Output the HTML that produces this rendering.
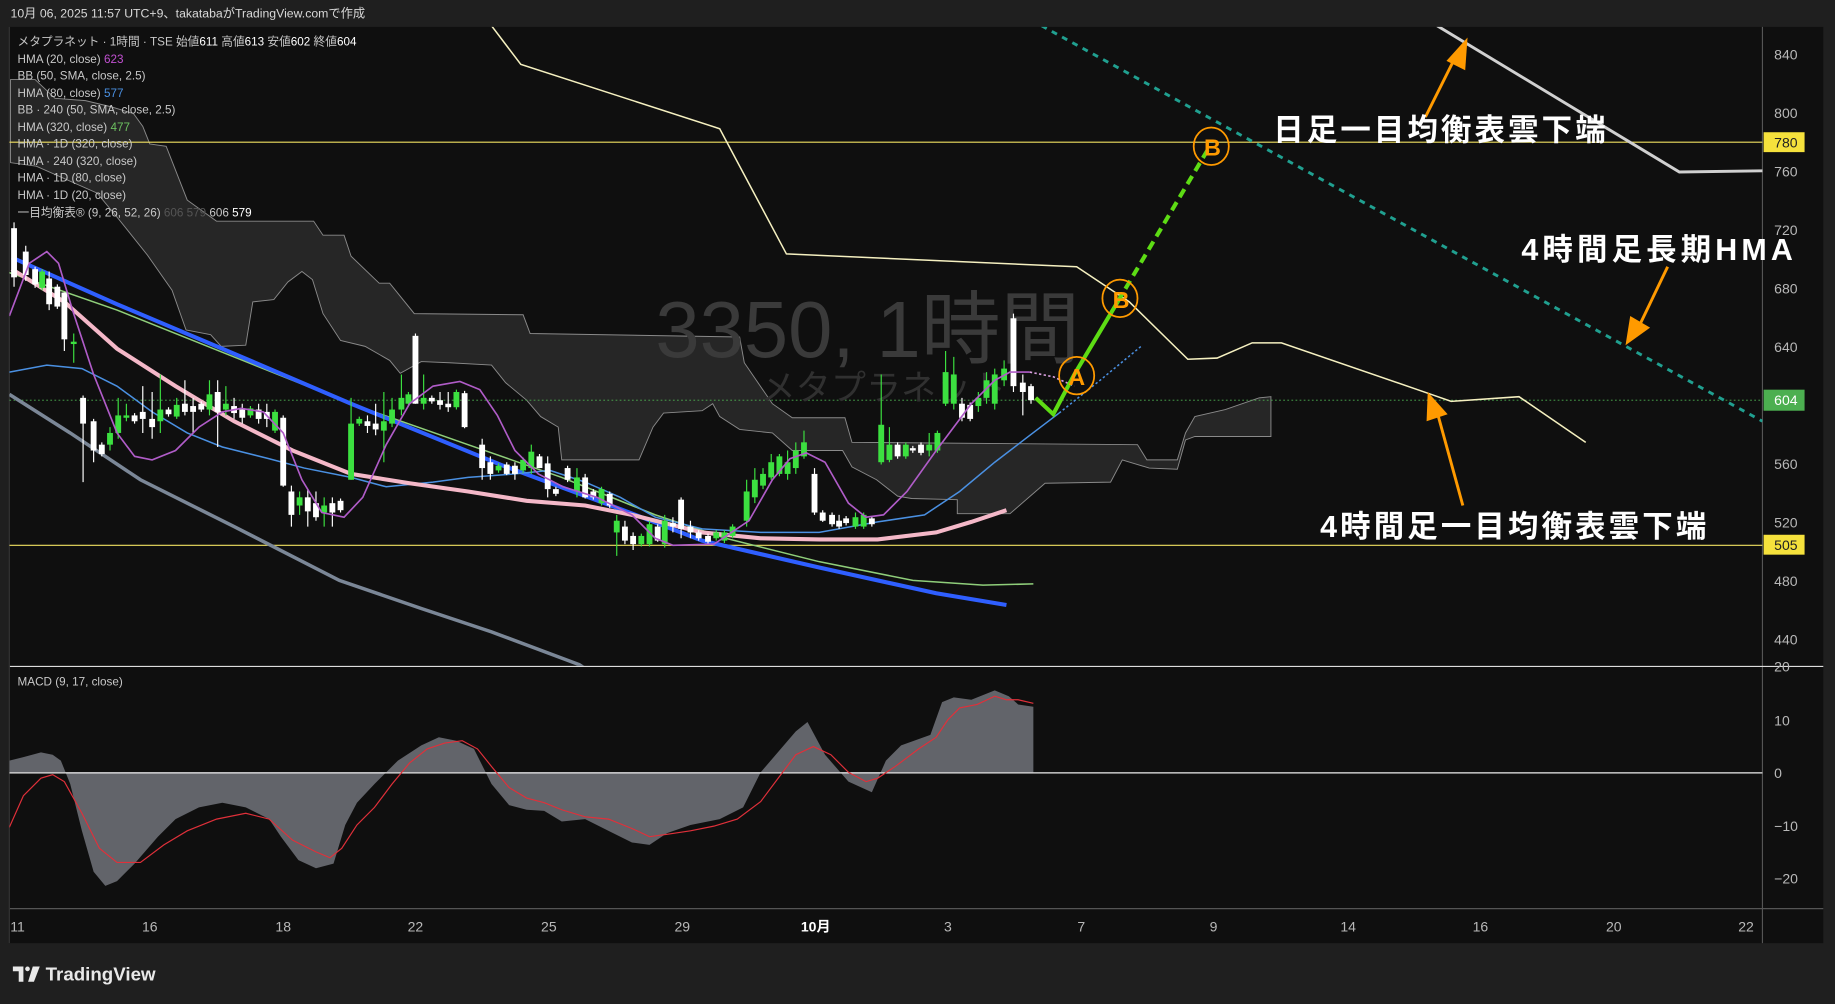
<!DOCTYPE html>
<html><head><meta charset="utf-8"><style>
html,body{margin:0;padding:0;background:#1f1f1f;width:1835px;height:1004px;overflow:hidden}
svg{display:block}
text{font-family:"Liberation Sans","Noto Sans CJK JP",sans-serif}
</style></head><body>
<svg width="1835" height="1004" viewBox="0 0 1568 858" preserveAspectRatio="none" xmlns="http://www.w3.org/2000/svg">
<rect x="0" y="0" width="1568" height="858" fill="#1f1f1f"/>
<text x="9" y="15" font-size="10.5" fill="#d8d8d8">10月 06, 2025 11:57 UTC+9、takatabaがTradingView.comで作成</text>
<rect x="8" y="23" width="1550" height="783" fill="#0f0f0f"/>
<line x1="1506" y1="23" x2="1506" y2="806" stroke="#555" stroke-width="1"/>
<line x1="8" y1="569.5" x2="1558" y2="569.5" stroke="#ddd" stroke-width="1"/>
<line x1="8" y1="776.5" x2="1558" y2="776.5" stroke="#555" stroke-width="1"/>
<line x1="8" y1="23" x2="8" y2="806" stroke="#333"/>

<clipPath id="main"><rect x="8" y="23" width="1498" height="546"/></clipPath>
<clipPath id="mac"><rect x="8" y="570" width="1498" height="206"/></clipPath>
<g clip-path="url(#main)">
<polygon fill="#262626" stroke="#8a8a8a" stroke-width="0.8" points="9,68 30,68 47,84 73,86 94,91 114,97 122,108 128,123 142,125 160,171 185,189 268,189 276,201 294,201 300,219 324,242 333,242 354,268 447,269 453,285 632,288 636,310 660,345 677,357 722,357 728,378 972,380 980,393 1006,393 1013,370 1021,356 1047,350 1076,340 1086,339 1086,373 1068,373 1021,373 1013,376 1006,401 982,400 959,393 949,412 893,413 863,439 818,439 818,427 779,426 767,424 749,410 728,399 720,385 677,385 660,370 632,367 615,356 609,345 600,351 567,353 558,365 546,393 480,393 477,365 462,356 450,342 432,327 420,312 384,310 360,309 342,319 333,308 312,296 291,291 276,268 267,239 258,232 246,241 234,256 216,258 210,295 189,296 180,286 159,282 147,248 126,218 102,188 83,165 31,142 9,139"/>
<line x1="8" y1="121.5" x2="1506" y2="121.5" stroke="#f0e060" stroke-width="1"/>
<line x1="8" y1="466" x2="1506" y2="466" stroke="#f0e060" stroke-width="1"/>
<line x1="8" y1="342" x2="1506" y2="342" stroke="#4caf50" stroke-width="0.8" stroke-dasharray="1.5,2"/>
<text x="560" y="305" font-size="68" fill="#3a3a3a">3350, 1時間</text>
<text x="650" y="342" font-size="30" fill="#303030">メタプラネット</text>
<polyline fill="none" stroke="#7b8797" stroke-width="3" points="8,337 60,370 120,410 200,450 290,496 360,520 420,540 495,568 510,578"/>
<polyline fill="none" stroke="#f5f0c0" stroke-width="1.3" points="420,22 445,55 615,110 672,217 920,228 965,258 1015,307 1040,306 1070,293 1095,293 1220,336 1240,343 1298,339 1355,378"/>
<polyline fill="none" stroke="#d0d0d0" stroke-width="2.5" points="1228,22 1435,147 1506,146"/>
<line x1="890" y1="22" x2="1506" y2="360" stroke="#20a090" stroke-width="2.5" stroke-dasharray="5,5"/>
<polyline fill="none" stroke="#8fce7a" stroke-width="1.3" points="8,233 100,265 200,305 300,345 400,380 480,408 560,440 620,460 700,480 780,496 840,500 883,499"/>
<polyline fill="none" stroke="#2f5fff" stroke-width="3.5" points="10,220 100,260 190,298 300,345 430,398 530,435 600,462 700,485 800,507 860,517"/>
<polyline fill="none" stroke="#4a90e2" stroke-width="1.3" points="8,318 40,312 70,315 100,330 130,352 160,370 190,382 230,392 260,400 300,408 330,416 370,412 400,408 440,405 470,402 500,412 530,425 560,442 600,452 650,455 700,455 750,446 790,440 820,420 850,395 880,372 905,353"/>
<polyline fill="none" stroke="#4a90e2" stroke-width="1.3" stroke-dasharray="2,2" points="905,353 940,325 975,296"/>
<polyline fill="none" stroke="#f4b8c8" stroke-width="3.5" points="10,230 55,258 100,298 150,330 200,360 250,385 300,405 350,413 400,420 450,428 500,432 540,440 600,455 650,460 700,461 750,461 800,455 830,446 860,436"/>
<g>
<g stroke-width="1">
<path stroke="#fff" d="M12,190V245M22,210V240M30,228V246M42,232V265M49,243V264M55,250V300M71,338V412M80,358V395M87,378V390M115,353V362M122,330V370M130,335V375M144,348V356M158,325V355M165,340V370M172,343V352M186,325V382M200,340V358M207,345V362M221,345V362M228,345V365M242,355V416M249,415V450M263,418V450M270,420V445M284,425V450M291,426V438M314,355V370M321,345V372M355,285V345M369,338V345M376,335V350M383,335V352M397,334V366M412,375V410M419,390V410M433,395V406M440,395V410M461,388V400M468,390V425M475,416V424M485,398V412M500,405V426M507,418V427M521,420V434M534,445V465M541,455V470M562,448V463M575,442V455M582,425V460M590,445V460M597,453V462M605,456V465M696,400V440M703,436V446M711,438V450M717,440V452M723,441V449M745,441V450M767,378V392M780,381V387M787,378V389M822,340V360M829,344V360M866,268V335M874,320V355M881,328V345"/>
<path stroke="#3ce040" d="M36,230V248M63,285V310M94,365V385M101,340V375M108,345V360M137,320V370M151,340V358M179,325V355M193,330V355M214,347V357M235,350V370M256,420V440M277,425V450M300,340V410M307,356V364M328,335V395M335,340V365M343,320V355M349,335V347M362,320V350M390,333V350M426,396V404M447,391V404M454,380V405M493,400V425M514,416V432M527,440V475M548,456V467M555,445V467M568,440V468M612,453V462M619,453V464M626,448V460M638,410V450M645,400V430M652,400V418M659,388V410M666,388V407M673,385V410M680,378V405M687,368V392M731,438V452M738,438V452M753,320V397M760,365V395M774,378V392M794,370V390M801,368V387M808,300V347M815,305V350M836,335V352M843,318V345M850,315V350M858,308V330"/>
</g>
<g fill="#fff">
<rect x="9.5" y="195" width="5" height="42"/><rect x="19.5" y="215" width="5" height="20"/><rect x="27.5" y="230" width="5" height="13"/><rect x="39.5" y="238" width="5" height="22"/><rect x="46.5" y="245" width="5" height="17"/><rect x="52.5" y="250" width="5" height="40"/><rect x="68.5" y="340" width="5" height="22"/><rect x="77.5" y="360" width="5" height="25"/><rect x="84.5" y="380" width="5" height="8"/><rect x="112.5" y="355" width="5" height="5"/><rect x="119.5" y="352" width="5" height="6"/><rect x="127.5" y="358" width="5" height="7"/><rect x="141.5" y="350" width="5" height="4"/><rect x="155.5" y="345" width="5" height="7"/><rect x="162.5" y="347" width="5" height="5"/><rect x="169.5" y="345" width="5" height="5"/><rect x="183.5" y="335" width="5" height="17"/><rect x="197.5" y="347" width="5" height="6"/><rect x="204.5" y="350" width="5" height="7"/><rect x="218.5" y="350" width="5" height="8"/><rect x="225.5" y="352" width="5" height="6"/><rect x="239.5" y="357" width="5" height="58"/><rect x="246.5" y="420" width="5" height="20"/><rect x="260.5" y="425" width="5" height="12"/><rect x="267.5" y="430" width="5" height="12"/><rect x="281.5" y="430" width="5" height="8"/><rect x="288.5" y="428" width="5" height="8"/><rect x="311.5" y="360" width="5" height="4"/><rect x="318.5" y="362" width="5" height="5"/><rect x="352.5" y="287" width="5" height="58"/><rect x="366.5" y="340" width="5" height="3"/><rect x="373.5" y="342" width="5" height="4"/><rect x="380.5" y="345" width="5" height="3"/><rect x="394.5" y="336" width="5" height="29"/><rect x="409.5" y="380" width="5" height="20"/><rect x="416.5" y="395" width="5" height="10"/><rect x="430.5" y="397" width="5" height="8"/><rect x="437.5" y="398" width="5" height="7"/><rect x="458.5" y="390" width="5" height="10"/><rect x="465.5" y="396" width="5" height="22"/><rect x="472.5" y="418" width="5" height="4"/><rect x="482.5" y="400" width="5" height="10"/><rect x="497.5" y="408" width="5" height="17"/><rect x="504.5" y="420" width="5" height="5"/><rect x="518.5" y="422" width="5" height="10"/><rect x="531.5" y="450" width="5" height="12"/><rect x="538.5" y="458" width="5" height="7"/><rect x="559.5" y="450" width="5" height="12"/><rect x="572.5" y="447" width="5" height="3"/><rect x="579.5" y="427" width="5" height="25"/><rect x="587.5" y="450" width="5" height="5"/><rect x="594.5" y="455" width="5" height="5"/><rect x="602.5" y="458" width="5" height="5"/><rect x="693.5" y="405" width="5" height="33"/><rect x="700.5" y="438" width="5" height="7"/><rect x="708.5" y="440" width="5" height="8"/><rect x="714.5" y="445" width="5" height="5"/><rect x="720.5" y="443" width="5" height="4"/><rect x="742.5" y="443" width="5" height="5"/><rect x="764.5" y="380" width="5" height="10"/><rect x="777.5" y="383" width="5" height="2"/><rect x="784.5" y="380" width="5" height="7"/><rect x="819.5" y="345" width="5" height="12"/><rect x="826.5" y="346" width="5" height="12"/><rect x="863.5" y="272" width="5" height="58"/><rect x="871.5" y="327" width="5" height="8"/><rect x="878.5" y="330" width="5" height="12"/>
</g>
<g fill="#3ce040">
<rect x="33.5" y="232" width="5" height="14"/><rect x="60.5" y="292" width="5" height="2"/><rect x="91.5" y="370" width="5" height="10"/><rect x="98.5" y="355" width="5" height="15"/><rect x="105.5" y="355" width="5" height="2"/><rect x="134.5" y="350" width="5" height="10"/><rect x="148.5" y="346" width="5" height="10"/><rect x="176.5" y="337" width="5" height="13"/><rect x="190.5" y="345" width="5" height="5"/><rect x="211.5" y="349" width="5" height="6"/><rect x="232.5" y="352" width="5" height="16"/><rect x="253.5" y="425" width="5" height="7"/><rect x="274.5" y="432" width="5" height="6"/><rect x="297.5" y="362" width="5" height="48"/><rect x="304.5" y="358" width="5" height="4"/><rect x="325.5" y="360" width="5" height="8"/><rect x="332.5" y="350" width="5" height="12"/><rect x="340.5" y="340" width="5" height="10"/><rect x="346.5" y="337" width="5" height="8"/><rect x="359.5" y="340" width="5" height="5"/><rect x="387.5" y="335" width="5" height="13"/><rect x="423.5" y="398" width="5" height="4"/><rect x="444.5" y="393" width="5" height="9"/><rect x="451.5" y="386" width="5" height="14"/><rect x="490.5" y="408" width="5" height="12"/><rect x="511.5" y="418" width="5" height="12"/><rect x="524.5" y="445" width="5" height="10"/><rect x="545.5" y="458" width="5" height="7"/><rect x="552.5" y="448" width="5" height="17"/><rect x="565.5" y="445" width="5" height="20"/><rect x="609.5" y="455" width="5" height="5"/><rect x="616.5" y="455" width="5" height="7"/><rect x="623.5" y="450" width="5" height="8"/><rect x="635.5" y="420" width="5" height="25"/><rect x="642.5" y="410" width="5" height="15"/><rect x="649.5" y="405" width="5" height="10"/><rect x="656.5" y="395" width="5" height="13"/><rect x="663.5" y="390" width="5" height="15"/><rect x="670.5" y="395" width="5" height="10"/><rect x="677.5" y="385" width="5" height="15"/><rect x="684.5" y="378" width="5" height="12"/><rect x="728.5" y="442" width="5" height="8"/><rect x="735.5" y="440" width="5" height="10"/><rect x="750.5" y="363" width="5" height="32"/><rect x="757.5" y="380" width="5" height="13"/><rect x="771.5" y="380" width="5" height="10"/><rect x="791.5" y="380" width="5" height="5"/><rect x="798.5" y="370" width="5" height="15"/><rect x="805.5" y="318" width="5" height="27"/><rect x="812.5" y="320" width="5" height="25"/><rect x="833.5" y="340" width="5" height="7"/><rect x="840.5" y="325" width="5" height="15"/><rect x="847.5" y="320" width="5" height="25"/><rect x="855.5" y="315" width="5" height="10"/>
</g>
</g>
<polyline fill="none" stroke="#b05cc8" stroke-width="1.4" points="8,270 25,225 40,215 50,225 62,265 80,320 100,370 115,390 130,393 150,385 170,365 190,352 206,349 225,352 242,370 258,410 275,438 294,442 310,425 330,380 350,345 370,330 393,326 410,333 425,355 440,385 460,405 481,416 510,425 540,440 560,460 575,466 610,465 640,445 660,410 675,392 689,387 705,395 725,430 740,442 755,440 775,420 800,385 830,345 850,325 863,318 880,318"/>
<polyline fill="none" stroke="#d9a0e0" stroke-width="1.4" stroke-dasharray="2,2" points="880,318 900,322 918,330"/>
<polyline fill="none" stroke="#5ddc14" stroke-width="3.5" points="885,340 900,354 918,320 955,258"/>
<line x1="955" y1="258" x2="1032" y2="128" stroke="#5ddc14" stroke-width="3.5" stroke-dasharray="8,5"/>
<g font-weight="bold" font-size="20" text-anchor="middle" fill="#ff9a00">
<ellipse cx="920" cy="321" rx="15" ry="16" fill="none" stroke="#ff9a00" stroke-width="1.5"/><text x="920" y="329">A</text>
<ellipse cx="957" cy="255" rx="15" ry="16" fill="none" stroke="#ff9a00" stroke-width="1.5"/><text x="958" y="263">B</text>
<ellipse cx="1035" cy="125" rx="15" ry="16" fill="none" stroke="#ff9a00" stroke-width="1.5"/><text x="1036" y="133">B</text>
</g>
<g fill="#ff9a00" stroke="#ff9a00">
<line x1="1218" y1="100" x2="1243" y2="50" stroke-width="2.5"/><polygon stroke="none" points="1254,32 1236,52 1252,60"/>
<line x1="1425" y1="228" x2="1400" y2="280" stroke-width="2.5"/><polygon stroke="none" points="1389,295 1393,270 1410,280"/>
<line x1="1250" y1="432" x2="1228" y2="352" stroke-width="2.5"/><polygon stroke="none" points="1220,335 1219,360 1237,354"/>
</g>
</g>
<g font-size="10" fill="#c8c8c8">
<text x="15" y="39">メタプラネット · 1時間 · TSE  始値<tspan fill="#fff">611</tspan>  高値<tspan fill="#fff">613</tspan>  安値<tspan fill="#fff">602</tspan>  終値<tspan fill="#fff">604</tspan></text>
<text x="15" y="54">HMA (20, close) <tspan fill="#c050d0">623</tspan></text>
<text x="15" y="68">BB (50, SMA, close, 2.5)</text>
<text x="15" y="83">HMA (80, close) <tspan fill="#4a90e2">577</tspan></text>
<text x="15" y="97">BB · 240 (50, SMA, close, 2.5)</text>
<text x="15" y="112">HMA (320, close) <tspan fill="#6cc060">477</tspan></text>
<text x="15" y="126">HMA · 1D (320, close)</text>
<text x="15" y="141">HMA · 240 (320, close)</text>
<text x="15" y="155">HMA · 1D (80, close)</text>
<text x="15" y="170">HMA · 1D (20, close)</text>
<text x="15" y="185">一目均衡表® (9, 26, 52, 26) <tspan fill="#555">606 579</tspan> 606 <tspan fill="#fff">579</tspan></text>
</g>
<g font-size="12" fill="#b8b8b8">
<text x="1516" y="51">840</text><text x="1516" y="101">800</text><text x="1516" y="151">760</text><text x="1516" y="201">720</text><text x="1516" y="251">680</text><text x="1516" y="301">640</text><text x="1516" y="401">560</text><text x="1516" y="451">520</text><text x="1516" y="501">480</text><text x="1516" y="551">440</text>
<text x="1516" y="574">20</text><text x="1516" y="620">10</text><text x="1516" y="665">0</text><text x="1516" y="710">−10</text><text x="1516" y="755">−20</text>
</g>
<rect x="1507" y="113" width="35" height="17" fill="#f5e13c"/><text x="1516" y="126" font-size="12" fill="#222">780</text>
<rect x="1507" y="333" width="35" height="18" fill="#4caf50"/><text x="1516" y="346" font-size="12" fill="#fff">604</text>
<rect x="1507" y="457" width="35" height="17" fill="#f5e13c"/><text x="1516" y="470" font-size="12" fill="#222">505</text>
<g font-weight="bold" font-size="26" fill="#fff">
<text x="1088" y="120" textLength="284" lengthAdjust="spacing">日足一目均衡表雲下端</text>
<text x="1300" y="222" textLength="232" lengthAdjust="spacing">4時間足長期HMA</text>
<text x="1128" y="459" textLength="330" lengthAdjust="spacing">4時間足一目均衡表雲下端</text>
</g>
<g clip-path="url(#mac)">
<polygon fill="#62646a" points="8,660 8,650 20,647 35,643 45,645 52,650 60,670 70,710 80,745 90,757 100,753 115,738 135,715 150,700 170,690 190,686 210,690 230,700 240,715 255,735 270,742 285,738 295,705 305,686 320,670 340,650 360,637 375,630 390,633 405,640 420,670 435,688 450,692 465,693 480,702 500,700 520,710 540,720 555,722 570,712 590,705 615,700 635,690 650,660 680,625 690,617 705,645 725,668 745,677 757,650 770,637 795,628 805,600 815,596 830,598 850,590 862,595 870,602 883,604 883,660"/>
<line x1="8" y1="660.5" x2="1506" y2="660.5" stroke="#eee" stroke-width="1"/>
<polyline fill="none" stroke="#e0303a" stroke-width="1" points="8,707 20,680 35,665 45,662 55,668 70,695 85,725 100,737 120,737 140,722 160,710 185,700 210,695 230,700 250,718 270,728 282,733 292,725 305,705 320,690 335,670 350,652 365,640 380,635 395,633 408,640 420,655 435,673 450,682 465,686 480,692 500,698 520,700 540,708 555,715 570,713 590,710 610,706 630,700 650,685 665,665 680,645 695,638 710,645 725,660 740,668 750,665 765,655 785,640 800,630 810,615 820,605 835,602 850,595 860,598 870,598 883,601"/>
</g>
<text x="15" y="586" font-size="10" fill="#c8c8c8">MACD (9, 17, close)</text>
<g font-size="12" fill="#b8b8b8" text-anchor="middle">
<text x="15" y="796">11</text><text x="128" y="796">16</text><text x="242" y="796">18</text><text x="355" y="796">22</text><text x="469" y="796">25</text><text x="583" y="796">29</text><text x="697" y="796" fill="#fff" font-weight="bold">10月</text><text x="810" y="796">3</text><text x="924" y="796">7</text><text x="1037" y="796">9</text><text x="1152" y="796">14</text><text x="1265" y="796">16</text><text x="1379" y="796">20</text><text x="1492" y="796">22</text>
</g>
<g fill="#e8e8e8">
<path d="M11,826h9v13h-4v-9h-5z"/><circle cx="23.5" cy="828" r="2"/><path d="M28,826h6l-5,13h-5z"/>
<text x="39" y="838" font-size="16" font-weight="bold">TradingView</text>
</g>
</svg>
</body></html>
